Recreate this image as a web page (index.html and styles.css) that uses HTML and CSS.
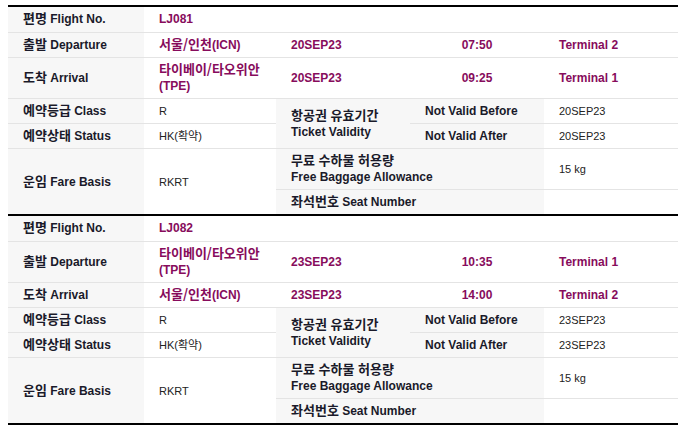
FILE: index.html
```html
<!DOCTYPE html>
<html lang="ko">
<head>
<meta charset="utf-8">
<title>Itinerary</title>
<link rel="stylesheet" href="styles.css">
</head>
<body>
<div class="itinerary">
  <table class="seg">
    <colgroup><col class="c1"><col class="c2"><col class="c3"><col class="c4"><col class="c5"></colgroup>
    <tr class="r-first"><th><span class="ko">편명</span> Flight No.</th><td class="hl" colspan="4">LJ081</td></tr>
    <tr><th><span class="ko">출발</span> Departure</th><td class="hl"><span class="ko">서울/인천</span>(ICN)</td><td class="hl">20SEP23</td><td class="hl ctr">07:50</td><td class="hl">Terminal 2</td></tr>
    <tr><th><span class="ko">도착</span> Arrival</th><td class="hl"><span class="ko">타이베이/타오위안</span><br>(TPE)</td><td class="hl">20SEP23</td><td class="hl ctr">09:25</td><td class="hl">Terminal 1</td></tr>
    <tr><th><span class="ko">예약등급</span> Class</th><td>R</td><th class="sub" rowspan="2"><span class="ko">항공권 유효기간</span><br>Ticket Validity</th><th class="sub">Not Valid Before</th><td>20SEP23</td></tr>
    <tr><th><span class="ko">예약상태</span> Status</th><td>HK(확약)</td><th class="sub">Not Valid After</th><td>20SEP23</td></tr>
    <tr><th rowspan="2"><span class="ko">운임</span> Fare Basis</th><td rowspan="2">RKRT</td><th class="sub" colspan="2"><span class="ko">무료 수하물 허용량</span><br>Free Baggage Allowance</th><td>15 kg</td></tr>
    <tr><th class="sub" colspan="2"><span class="ko">좌석번호</span> Seat Number</th><td></td></tr>
  </table>
  <table class="seg">
    <colgroup><col class="c1"><col class="c2"><col class="c3"><col class="c4"><col class="c5"></colgroup>
    <tr class="r-first"><th><span class="ko">편명</span> Flight No.</th><td class="hl" colspan="4">LJ082</td></tr>
    <tr><th><span class="ko">출발</span> Departure</th><td class="hl"><span class="ko">타이베이/타오위안</span><br>(TPE)</td><td class="hl">23SEP23</td><td class="hl ctr">10:35</td><td class="hl">Terminal 1</td></tr>
    <tr><th><span class="ko">도착</span> Arrival</th><td class="hl"><span class="ko">서울/인천</span>(ICN)</td><td class="hl">23SEP23</td><td class="hl ctr">14:00</td><td class="hl">Terminal 2</td></tr>
    <tr><th><span class="ko">예약등급</span> Class</th><td>R</td><th class="sub" rowspan="2"><span class="ko">항공권 유효기간</span><br>Ticket Validity</th><th class="sub">Not Valid Before</th><td>23SEP23</td></tr>
    <tr><th><span class="ko">예약상태</span> Status</th><td>HK(확약)</td><th class="sub">Not Valid After</th><td>23SEP23</td></tr>
    <tr><th rowspan="2"><span class="ko">운임</span> Fare Basis</th><td rowspan="2">RKRT</td><th class="sub" colspan="2"><span class="ko">무료 수하물 허용량</span><br>Free Baggage Allowance</th><td>15 kg</td></tr>
    <tr><th class="sub" colspan="2"><span class="ko">좌석번호</span> Seat Number</th><td></td></tr>
  </table>
</div>
</body>
</html>
```
FILE: styles.css
```css
html, body {
  margin: 0;
  background: #fff;
}
body {
  padding: 5px 8px 0 8px;
  font-family: "Liberation Sans", "Noto Sans CJK KR", sans-serif;
  font-size: 12px;
  color: #222;
}
.itinerary {
  width: 670px;
  border-bottom: 2px solid #000;
}
.seg {
  width: 670px;
  border-collapse: collapse;
  table-layout: fixed;
  border-top: 2px solid #000;
}
.c1 { width: 136px; }
.c2 { width: 132px; }
.c3 { width: 134px; }
.c4 { width: 134px; }
.c5 { width: 134px; }
.seg th,
.seg td {
  padding: 4px 15px 4px 15px;
  line-height: 16px;
  text-align: left;
  vertical-align: middle;
  border-top: 1px solid #e4e4e4;
  white-space: nowrap;
}
.seg tr.r-first th,
.seg tr.r-first td {
  border-top: none;
  padding-bottom: 5px;
}
.ko {
  font-family: "Noto Sans CJK KR", sans-serif;
  font-size: 13px;
  line-height: 12px;
}
.seg th {
  background: #f7f7f7;
  font-weight: bold;
  color: #1a1a2a;
}
.seg td {
  font-weight: normal;
  font-size: 11px;
  color: #222;
}
.seg td.hl {
  font-size: 12px;
  color: #870c5c;
  font-weight: bold;
}
.seg td.ctr {
  text-align: center;
}
```
